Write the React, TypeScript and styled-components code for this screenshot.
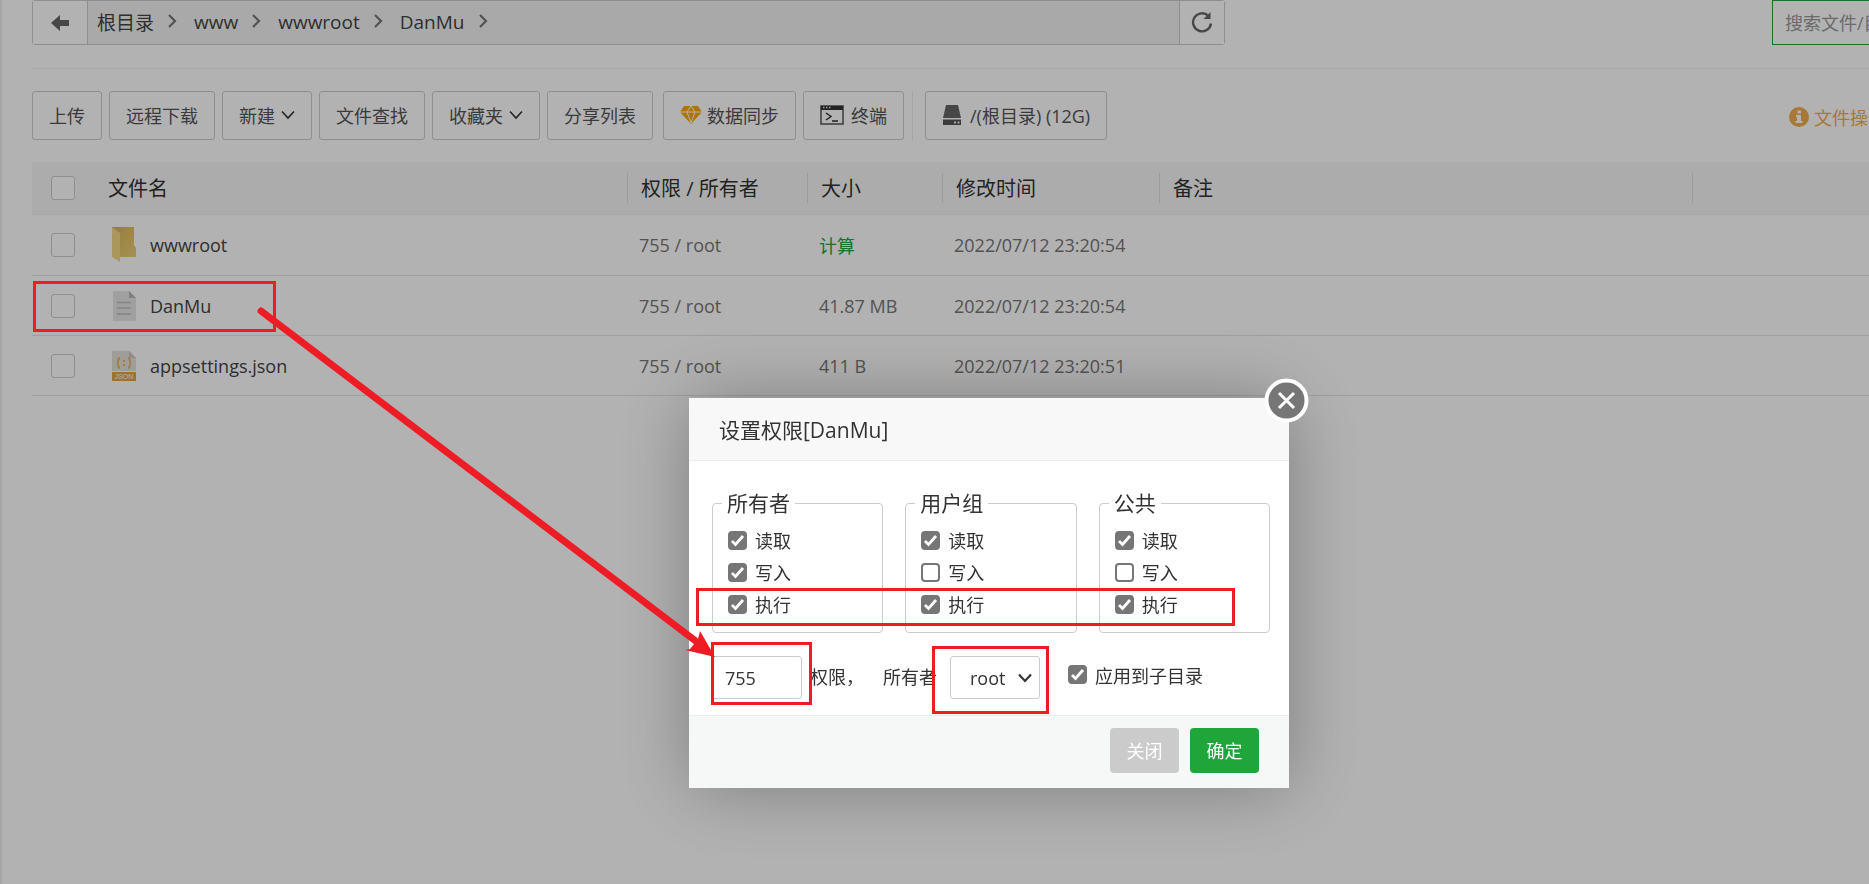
import React from 'react';
import styled, { createGlobalStyle } from 'styled-components';

const Global = createGlobalStyle`
  *, *::before, *::after { box-sizing: border-box; }
  html, body { margin: 0; }
  body {
    font-family: "Open Sans", "Noto Sans CJK SC", sans-serif;
    font-size: 18px;
    color: #555;
    background: #fff;
    overflow: hidden;
  }
  button, input, select { font: inherit; color: inherit; margin: 0; }
`;

const Page = styled.main`
  min-height: 100vh;
  padding-left: 30px;
  border-left: 2px solid #f0f0f0;
  overflow: hidden;
`;

const PathRow = styled.div`
  display: flex;
  justify-content: space-between;
  height: 45px;
`;

const PathBar = styled.nav`
  display: flex;
  flex: 0 1 1193px;
  border: 1px solid #ccc;
  border-radius: 3px;
  background: #f3f3f3;
`;

const PathButton = styled.button<{ $side: 'left' | 'right' }>`
  display: flex;
  align-items: center;
  justify-content: center;
  width: ${p => (p.$side === 'left' ? 55 : 45)}px;
  padding: 0;
  border: 0;
  border-${p => (p.$side === 'left' ? 'right' : 'left')}: 1px solid #ccc;
  background: #fff;
`;

const Crumbs = styled.ol`
  display: flex;
  flex: 1;
  align-items: center;
  margin: 0;
  padding: 0 0 1px 9px;
  list-style: none;
  font-size: 19px;
`;

const Crumb = styled.li`
  display: flex;
  align-items: center;
  a { color: #444; text-decoration: none; }
  svg { margin: 0 17px 2px 13px; }
`;

const Cutoff = styled.div`
  display: flex;
  flex: 0 0 97px;
  overflow: hidden;
`;

const Search = styled.input`
  flex: 0 0 280px;
  padding: 0 12px;
  border: 1px solid #20a53a;
  outline: 0;
  background: #fff;
  &::placeholder { color: #999; opacity: 1; }
`;

const Toolbar = styled.div`
  display: flex;
  align-items: center;
  margin-top: 23px;
  padding: 22px 0;
  border-top: 1px solid #f0f0f0;
`;

const ToolGroup = styled.div`
  display: flex;
  gap: 7px;
  margin-right: 10px;
`;

const ToolButton = styled.button<{ $gap?: number }>`
  display: flex;
  align-items: center;
  gap: ${p => p.$gap ?? 4}px;
  height: 49px;
  padding: 0 16px 2px;
  border: 1px solid #ccc;
  border-radius: 3px;
  background: #fff;
  white-space: nowrap;
`;

const ToolSplit = styled.span`
  width: 1px;
  margin: 0 5px 0 1px;
  background: #eee;
`;

const Hint = styled.a`
  display: flex;
  align-items: center;
  gap: 5px;
  flex: 0 0 80px;
  margin-left: auto;
  padding-top: 3px;
  overflow: hidden;
  color: #f0ad4e;
  text-decoration: none;
  white-space: nowrap;
  svg { flex: none; }
`;

const Files = styled.table`
  width: 100%;
  border-collapse: separate;
  border-spacing: 0;
  table-layout: fixed;
`;

const Head = styled.th<{ $split?: boolean; $inset?: boolean }>`
  height: 53px;
  padding: 0 0 1px ${p => (p.$split ? 14 : p.$inset ? 12 : 0)}px;
  border-bottom: 1px solid #eee;
  background: ${p => (p.$split ? 'linear-gradient(#dedede, #dedede) 0 11px / 1px 30px no-repeat #f7f7f7' : '#f7f7f7')};
  color: #333;
  font-size: 20px;
  font-weight: 400;
  text-align: left;
`;

const Cell = styled.td<{ $dark?: boolean }>`
  padding: 0 0 0 12px;
  border-bottom: 1px solid #e4e4e4;
  color: ${p => (p.$dark ? '#444' : '#777')};
  a { color: #20a53a; text-decoration: none; }
`;

const Row = styled.tr`
  position: relative;
  height: 60px;
  &:first-child { height: 61px; }
`;

const PickCell = styled.td`
  padding: 0;
  border-bottom: 1px solid #e4e4e4;
`;

const Pick = styled.input`
  display: block;
  appearance: none;
  width: 24px;
  height: 24px;
  margin-left: 19px;
  border: 1px solid #ccc;
  border-radius: 3px;
  background: #fff;
`;

const FileName = styled.span`
  display: flex;
  align-items: center;
  gap: 12px;
  padding-left: 2px;
`;

const Shade = styled.div`
  position: fixed;
  inset: 0;
  z-index: 1;
  display: flex;
  align-items: center;
  justify-content: center;
  padding: 302px 0 0 109px;
  background: rgba(0, 0, 0, 0.3);
`;

const Dialog = styled.section`
  position: relative;
  width: 600px;
  border-radius: 2px;
  background: #fff;
  color: #333;
  box-shadow: 1px 1px 75px rgba(0, 0, 0, 0.3);
`;

const DialogTitle = styled.h2`
  margin: 0;
  padding: 0 30px;
  height: 63px;
  border-bottom: 1px solid #eee;
  background: #f8f8f8;
  font-size: 21px;
  font-weight: 400;
  line-height: 64px;
`;

const CloseButton = styled.button`
  position: absolute;
  top: -20px;
  right: -20px;
  width: 45px;
  height: 45px;
  padding: 0;
  border: 0;
  background: none;
  svg { display: block; }
`;

const Body = styled.form`
  padding: 27px 19px 16px 23px;
`;

const Groups = styled.div`
  display: grid;
  grid-template-columns: repeat(3, 1fr);
  gap: 22px;
`;

const Group = styled.fieldset`
  min-width: 0;
  height: 145px;
  margin: 0;
  padding: 6px 15px 0;
  border: 1px solid #ccc;
  border-radius: 4px;
  legend {
    margin-left: -6px;
    padding: 0 5px;
    font-size: 21px;
    line-height: 30px;
  }
`;

const Check = styled.label`
  display: flex;
  align-items: center;
  gap: 8px;
  height: 32px;
`;

const Tick = styled.input`
  flex: none;
  appearance: none;
  width: 19px;
  height: 19px;
  border: 2px solid #767676;
  border-radius: 4px;
  background: #fff;
  &:checked {
    background: #767676 url("data:image/svg+xml,%3Csvg xmlns='http://www.w3.org/2000/svg' viewBox='0 0 15 15'%3E%3Cpath d='M2 8l3.500 3.500L13 3' fill='none' stroke='%23fff' stroke-width='2.800'/%3E%3C/svg%3E") center / 15px 15px no-repeat;
  }
`;

const Fields = styled.div`
  display: flex;
  align-items: center;
  margin-top: 23px;
`;

const Mode = styled.input`
  width: 90px;
  height: 43px;
  padding: 0 12px;
  border: 1px solid #ccc;
  border-radius: 3px;
  background: #fff;
`;

const FieldLabel = styled.label<{ $gap: number }>`
  margin-left: ${p => p.$gap}px;
  line-height: 43px;
  white-space: nowrap;
`;

const SelectBox = styled.span`
  display: flex;
  align-items: center;
  margin-left: 13px;
  select {
    appearance: none;
    width: 90px;
    height: 43px;
    padding: 0 0 0 19px;
    border: 1px solid #ccc;
    border-radius: 3px;
    background: #fff;
  }
  svg { margin-left: -22px; margin-right: 8px; pointer-events: none; }
`;

const SubCheck = styled(Check)`
  margin: 0 0 6px 28px;
  white-space: nowrap;
`;

const Footer = styled.footer`
  display: flex;
  justify-content: flex-end;
  gap: 11px;
  padding: 12px 30px 15px;
  border-top: 1px solid #ebeeed;
  background: #f5f8f7;
`;

const Action = styled.button<{ $primary?: boolean }>`
  width: 69px;
  height: 45px;
  padding: 0 0 2px;
  border: 0;
  border-radius: 4px;
  background: ${p => (p.$primary ? '#20a53a' : '#cbcbcb')};
  color: #fff;
`;

const Mark = styled.span<{ $x: number; $y: number; $w: number; $h: number }>`
  position: absolute;
  left: ${p => p.$x}px;
  top: ${p => p.$y}px;
  width: ${p => p.$w}px;
  height: ${p => p.$h}px;
  z-index: 2;
  border: 3px solid #ee1c25;
  pointer-events: none;
`;

const Arrow = styled.svg`
  position: absolute;
  left: -434px;
  top: -93px;
  z-index: 2;
  pointer-events: none;
`;

const DownChevron = ({ weight }: { weight: number }) => (
  <svg width="14" height="10" viewBox="0 0 14 10" fill="none" stroke="#333" strokeWidth={weight}>
    <path d="M1 1.500l6 6.500 6-6.500" />
  </svg>
);

const CrumbChevron = () => (
  <svg width="10" height="14" viewBox="0 0 10 14" fill="none" stroke="#777" strokeWidth="2.200">
    <path d="M2 1l6 6-6 6" />
  </svg>
);

const FolderIcon = () => (
  <svg width="28" height="36" viewBox="0 0 28 36">
    <defs>
      <linearGradient id="folder" x1="0" y1="0" x2="1" y2="1">
        <stop offset="0" stopColor="#d9b54f" />
        <stop offset="1" stopColor="#edd07c" />
      </linearGradient>
    </defs>
    <path d="M2 0h22v18l2 3v9H4z" fill="url(#folder)" />
    <path d="M2 0l8 6v29l-8-5z" fill="#f3d885" />
  </svg>
);

const TextIcon = () => (
  <svg width="28" height="36" viewBox="0 0 28 36">
    <path d="M3 3h16l7 7v23H3z" fill="#e6e6e6" />
    <path d="M19 3l7 7h-7z" fill="#b8b8b8" />
    <path d="M7 14.500h14M7 20h14M7 26h14" stroke="#bdbdbd" strokeWidth="1.500" />
  </svg>
);

const JsonIcon = () => (
  <svg width="28" height="36" viewBox="0 0 28 36">
    <path d="M2 3h17l7 7v13H2z" fill="#e3e1d8" />
    <path d="M19 3l7 7h-7z" fill="#cbcac2" />
    <path d="M2 24h24v9H2z" fill="#e5a244" />
    <path d="M10 10c-3 0-1 5-3 5 2 0 0 5 3 5M18 10c3 0 1 5 3 5-2 0 0 5-3 5" fill="none" stroke="#eab060" strokeWidth="1.800" />
    <path d="M13 12h2v2h-2zM13 16h2v2h-2z" fill="#eab060" />
    <text x="14" y="31" textAnchor="middle" fontFamily="Liberation Sans" fontSize="7" fill="#fff">JSON</text>
  </svg>
);

const files = [
  { name: 'wwwroot', icon: <FolderIcon />, size: '', time: '2022/07/12 23:20:54' },
  { name: 'DanMu', icon: <TextIcon />, size: '41.87 MB', time: '2022/07/12 23:20:54', marked: true },
  { name: 'appsettings.json', icon: <JsonIcon />, size: '411 B', time: '2022/07/12 23:20:51' },
];

const groups = [
  { title: '所有者', write: true },
  { title: '用户组', write: false },
  { title: '公共', write: false },
];

export default function App() {
  return (
    <>
      <Global />
      <Page>
        <PathRow>
          <PathBar aria-label="路径">
            <PathButton $side="left" aria-label="返回">
              <svg width="18" height="16" viewBox="0 0 18 16"><path d="M0 8l9-8v5h9v6H9v5z" fill="#666" /></svg>
            </PathButton>
            <Crumbs>
              {['根目录', 'www', 'wwwroot', 'DanMu'].map(c => (
                <Crumb key={c}><a href="#path">{c}</a><CrumbChevron /></Crumb>
              ))}
            </Crumbs>
            <PathButton $side="right" aria-label="刷新">
              <svg width="22" height="24" viewBox="0 0 22 24">
                <path d="M17.500 5A9 9 0 1 0 20 12.500" fill="none" stroke="#666" strokeWidth="2.400" />
                <path d="M19.500 1v7h-7z" fill="#666" />
              </svg>
            </PathButton>
          </PathBar>
          <Cutoff><Search aria-label="搜索" placeholder="搜索文件/目录" /></Cutoff>
        </PathRow>

        <Toolbar>
          <ToolGroup>
            <ToolButton>上传</ToolButton>
            <ToolButton>远程下载</ToolButton>
            <ToolButton $gap={6}>新建<DownChevron weight={1.6} /></ToolButton>
            <ToolButton>文件查找</ToolButton>
            <ToolButton $gap={6}>收藏夹<DownChevron weight={1.6} /></ToolButton>
            <ToolButton>分享列表</ToolButton>
          </ToolGroup>
          <ToolGroup>
            <ToolButton $gap={5}>
              <svg width="22" height="18" viewBox="0 0 22 18">
                <path d="M4 0h14l4 6-11 12L0 6z" fill="#fca60a" />
                <path d="M0 6h22M7 6l4 11 4-11M7 6l4-6 4 6" fill="none" stroke="#fff" strokeWidth="1" />
              </svg>
              数据同步
            </ToolButton>
            <ToolButton $gap={6}>
              <svg width="25" height="20" viewBox="0 0 25 20">
                <path d="M1 1h22v18H1z" fill="#fff" stroke="#555" strokeWidth="1.500" />
                <path d="M1 1h22v4H1z" fill="#333" />
                <path d="M3 2.500h1.500M6 2.500h1.500M9 2.500h1.500" stroke="#ddd" strokeWidth="1.500" />
                <path d="M6 8l5 3.500L6 15M12 16h6" fill="none" stroke="#333" strokeWidth="1.500" />
              </svg>
              终端
            </ToolButton>
            <ToolSplit />
            <ToolButton $gap={8}>
              <svg width="20" height="20" viewBox="0 0 20 20">
                <path d="M4 0h12l3 13H1z" fill="#666" />
                <path d="M1 14.500h18V20H1z" fill="#555" />
                <path d="M12 16.500h2v2h-2zM15.500 16.500h2v2h-2z" fill="#eee" />
              </svg>
              /(根目录) (12G)
            </ToolButton>
          </ToolGroup>
          <Hint href="#log">
            <svg width="20" height="20" viewBox="0 0 20 20">
              <circle cx="10" cy="10" r="10" fill="#f0ad4e" />
              <path d="M8.500 3.500h3.500v3H8.500zM7 8h5v6h1.500v2H6.500v-2H8v-4H7z" fill="#fff" />
            </svg>
            文件操作记录
          </Hint>
        </Toolbar>

        <Files>
          <colgroup>
            <col style={{ width: 64 }} />
            <col style={{ width: 531 }} />
            <col style={{ width: 180 }} />
            <col style={{ width: 135 }} />
            <col style={{ width: 217 }} />
            <col />
            <col style={{ width: 177 }} />
          </colgroup>
          <thead>
            <tr>
              <Head><Pick type="checkbox" aria-label="全选" /></Head>
              <Head $inset>文件名</Head>
              <Head $split>权限 / 所有者</Head>
              <Head $split>大小</Head>
              <Head $split>修改时间</Head>
              <Head $split>备注</Head>
              <Head $split />
            </tr>
          </thead>
          <tbody>
            {files.map(f => (
              <Row key={f.name}>
                <PickCell>
                  <Pick type="checkbox" aria-label={f.name} />
                  {f.marked && <Mark $x={1} $y={5} $w={243} $h={51} />}
                </PickCell>
                <Cell $dark><FileName>{f.icon}{f.name}</FileName></Cell>
                <Cell>755 / root</Cell>
                <Cell>{f.size || <a href="#size">计算</a>}</Cell>
                <Cell>{f.time}</Cell>
                <Cell />
                <Cell />
              </Row>
            ))}
          </tbody>
        </Files>
      </Page>

      <Shade>
        <Dialog role="dialog" aria-label="设置权限">
          <DialogTitle>设置权限[DanMu]</DialogTitle>
          <CloseButton aria-label="关闭窗口">
            <svg width="45" height="45" viewBox="0 0 45 45">
              <circle cx="22.500" cy="22.500" r="20" fill="#767676" stroke="#fff" strokeWidth="4" />
              <path d="M15 15l15 15M30 15L15 30" stroke="#fff" strokeWidth="3" />
            </svg>
          </CloseButton>
          <Body>
            <Groups>
              {groups.map(g => (
                <Group key={g.title}>
                  <legend>{g.title}</legend>
                  <Check><Tick type="checkbox" defaultChecked />读取</Check>
                  <Check><Tick type="checkbox" defaultChecked={g.write} />写入</Check>
                  <Check><Tick type="checkbox" defaultChecked />执行</Check>
                </Group>
              ))}
            </Groups>
            <Fields>
              <Mode id="mode" defaultValue="755" />
              <FieldLabel $gap={8} htmlFor="mode">权限，</FieldLabel>
              <FieldLabel $gap={19} htmlFor="owner">所有者</FieldLabel>
              <SelectBox>
                <select id="owner"><option>root</option></select>
                <DownChevron weight={2.2} />
              </SelectBox>
              <SubCheck><Tick type="checkbox" defaultChecked />应用到子目录</SubCheck>
            </Fields>
          </Body>
          <Footer>
            <Action>关闭</Action>
            <Action $primary>确定</Action>
          </Footer>
          <Mark $x={7} $y={190} $w={539} $h={38} />
          <Mark $x={22} $y={244} $w={101} $h={63} />
          <Mark $x={243} $y={248} $w={117} $h={68} />
          <Arrow width="462" height="354" viewBox="0 0 462 354">
            <path d="M6 6L442 337" stroke="#ee1c25" strokeWidth="7" strokeLinecap="round" />
            <path d="M460 352L445 326l-2 8-8 10-5 1z" fill="#ee1c25" />
          </Arrow>
        </Dialog>
      </Shade>
    </>
  );
}
